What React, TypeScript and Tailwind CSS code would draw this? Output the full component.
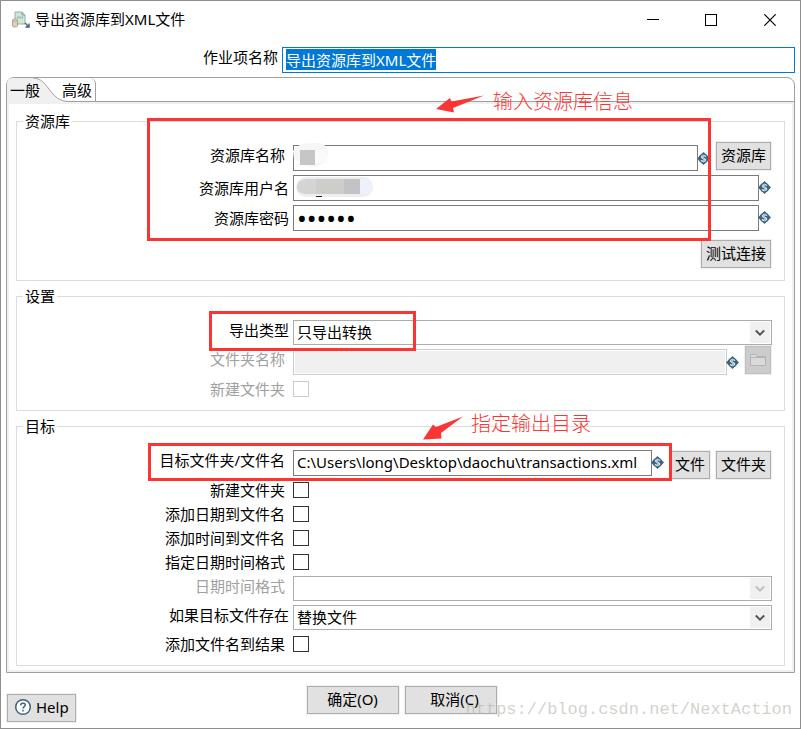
import { useEffect, useRef } from "react";
import type { ReactNode } from "react";

const inputFrame = "h-[26px] min-w-0 flex-1 border border-[#7a7a7a] bg-white px-[3px] outline-none";
const inputBox = `${inputFrame} pb-0.5`;

function VariableIcon() {
  return (
    <svg viewBox="0 0 13 13" className="mb-0.5 -ml-px h-[13px] w-[13px] shrink-0" aria-hidden="true">
      <circle cx="6.5" cy="6.5" r="4.800" fill="#3d6480" />
      <path d="M6.5 0 L13 6.5 L6.5 13 L0 6.5 Z" fill="#3d6480" />
      <path
        d="M8.800 4.700 C8.300 3.200 4.600 3.200 4.600 5 C4.600 6.900 8.600 6 8.600 8 C8.500 9.900 4.800 9.800 4.300 8.200"
        fill="none"
        stroke="#e3ecf2"
        strokeWidth="1.400"
      />
      <path d="M6.5 2.500 V10.500" stroke="#a9bfcd" />
    </svg>
  );
}

function Button({ children, className = "h-7 px-1" }: { children: ReactNode; className?: string }) {
  return (
    <button
      type="button"
      className={`m-px flex shrink-0 items-center justify-center border border-[#adadad] bg-[#e1e1e1] pb-0.5 whitespace-nowrap shadow-[0_0_0_1px_#f0f0f0] ${className}`}
    >
      {children}
    </button>
  );
}

function Label({
  id,
  children,
  className = "pr-2",
}: {
  id: string;
  children: ReactNode;
  className?: string;
}) {
  return (
    <label htmlFor={id} className={`w-[276px] shrink-0 text-right leading-5 whitespace-nowrap ${className}`}>
      {children}
    </label>
  );
}

function Group({ title, className, children }: { title: string; className: string; children: ReactNode }) {
  return (
    <fieldset className={`min-w-0 border border-[#dcdcdc] pr-3 ${className}`}>
      <legend className="ml-1.5 px-0.5 leading-[22px]">{title}</legend>
      {children}
    </fieldset>
  );
}

function Select({ id, value, disabled = false }: { id: string; value: string; disabled?: boolean }) {
  return (
    <div className="relative flex-1">
      <select
        id={id}
        disabled={disabled}
        className="block h-[25px] w-full appearance-none border border-[#acacb0] bg-white px-[3px] pb-0.5 text-black opacity-100 outline-none"
      >
        <option>{value}</option>
      </select>
      <span className="pointer-events-none absolute inset-y-0.5 right-0.5 flex w-5 items-center justify-center bg-[#f0f0f0]">
        <svg viewBox="0 0 10 8" className="h-2 w-2.5" aria-hidden="true">
          <path d="M0.8 1.5 L5 5.7 L9.2 1.5" fill="none" stroke={disabled ? "#bfbfbf" : "#555555"} strokeWidth="2" />
        </svg>
      </span>
    </div>
  );
}

function CheckRow({
  id,
  label,
  disabled = false,
  className = "",
}: {
  id: string;
  label: string;
  disabled?: boolean;
  className?: string;
}) {
  return (
    <div className={`flex h-6 items-center ${className}`}>
      <Label id={id} className={disabled ? "pr-2 text-[#a0a0a0]" : "pr-2"}>
        {label}
      </Label>
      <input
        id={id}
        type="checkbox"
        disabled={disabled}
        className="size-4 appearance-none border border-[#333333] bg-white checked:bg-[#0078d7] disabled:border-[#cccccc]"
      />
    </div>
  );
}

function TitleBar() {
  return (
    <header className="flex h-[38px] items-center pl-2.5">
      <svg viewBox="0 0 20 18" className="h-[18px] w-5" aria-hidden="true">
        <path d="M4 1 H11 L14 4 V13 H4 Z" fill="#cfe8d6" stroke="#8fb3a5" />
        <path d="M11 1 V4 H14" fill="none" stroke="#7fa0a0" />
        <path d="M6 6.5 H12" stroke="#8fb3a5" strokeDasharray="1.5 0.8" strokeWidth="2" />
        <path d="M1.5 9 V15 C1.5 16.3 6.5 16.3 6.5 15 V9" fill="#e2cdb8" stroke="#b7a291" />
        <ellipse cx="4" cy="9" rx="2.5" ry="1" fill="#f1e4d6" stroke="#b7a291" />
        <path d="M14 12 L17.5 15.5 M18 12.5 V16 H14.5" fill="none" stroke="#38647f" strokeWidth="1.4" />
      </svg>
      <h1 className="ml-1 flex-1 pb-0.5 text-[15px] font-normal">导出资源库到XML文件</h1>
      <button type="button" aria-label="最小化" className="flex h-full w-[58px] items-center justify-center">
        <svg viewBox="0 0 12 12" className="size-3">
          <path d="M0 5.5 H12" stroke="black" />
        </svg>
      </button>
      <button type="button" aria-label="最大化" className="flex h-full w-[58px] items-center justify-center">
        <svg viewBox="0 0 12 12" className="size-3">
          <rect x="0.5" y="0.5" width="11" height="11" fill="none" stroke="black" />
        </svg>
      </button>
      <button type="button" aria-label="关闭" className="flex h-full w-[60px] items-center justify-center">
        <svg viewBox="0 0 12 12" className="size-3">
          <path d="M0.3 0.3 L11.7 11.7 M11.7 0.3 L0.3 11.7" stroke="black" strokeWidth="1.2" />
        </svg>
      </button>
    </header>
  );
}

function Tabs() {
  return (
    <div role="tablist" className="relative flex h-[24px] border-b border-[#a0a0a0]">
      <svg viewBox="0 0 90 25" className="absolute top-0 left-0 h-[25px] w-[90px]" aria-hidden="true">
        <path d="M0 25 V6 Q0 0 6 0 H26 C42 0 42 23.5 62 23.5 V25 Z" fill="#f0f0f0" />
        <path d="M26 0 C42 0 42 23.5 62 23.5" fill="none" stroke="#a0a0a0" />
      </svg>
      <button type="button" role="tab" aria-selected="true" className="relative h-full w-[53px] pl-[3px] text-left">
        一般
      </button>
      <button
        type="button"
        role="tab"
        aria-selected="false"
        className="relative h-full rounded-tr-md border-r border-[#a0a0a0] pr-[3px] pl-0.5"
      >
        高级
      </button>
    </div>
  );
}

function Annotations() {
  return (
    <div className="pointer-events-none absolute inset-0 text-xl leading-6 font-light text-[#fa3534]">
      <svg viewBox="0 0 48 18" className="absolute top-[94px] left-[435px] h-[18px] w-12" aria-hidden="true">
        <path d="M0 14 L14 3 L15.500 6.500 L48 0.500 L17 13 L18 17.5 Z" fill="#fa3534" />
      </svg>
      <p className="absolute top-[89px] left-[492px]">输入资源库信息</p>
      <div className="absolute top-[117px] left-[146px] h-[123px] w-[564px] border-3 border-[#fa3534]" />
      <div className="absolute top-[310px] left-[208px] h-10 w-[207px] border-3 border-[#fa3534]" />
      <svg viewBox="0 0 40 24" className="absolute top-[415px] left-[422px] h-6 w-10" aria-hidden="true">
        <path d="M0 23.5 L10 8.500 L13 11 L40 0.500 L18 17 L18.500 22.500 Z" fill="#fa3534" />
      </svg>
      <p className="absolute top-[411px] left-[470px]">指定输出目录</p>
      <div className="absolute top-[442px] left-[147px] h-[38px] w-[524px] border-3 border-[#fa3534]" />
    </div>
  );
}

function NameRow() {
  const ref = useRef<HTMLInputElement>(null);
  useEffect(() => {
    ref.current?.focus();
    ref.current?.select();
  }, []);
  return (
    <div className="mt-2 flex pr-[5px]">
      <label htmlFor="job-name" className="w-[281px] shrink-0 pr-1 text-right leading-5">
        作业项名称
      </label>
      <input
        id="job-name"
        ref={ref}
        defaultValue="导出资源库到XML文件"
        className="h-[26px] min-w-0 flex-1 border border-[#0078d7] bg-white px-[3px] pb-0.5 outline-none selection:bg-[#0078d7] selection:text-white"
      />
    </div>
  );
}

export default function App() {
  return (
    <main className="relative flex min-h-screen flex-col border border-[#8e8e8e] bg-white font-['Noto_Sans','Noto_Sans_CJK_SC',sans-serif] text-[15px] leading-5 text-black">
      <TitleBar />
      <NameRow />

      <section className="mx-[5px] mt-1 rounded-t-lg border border-[#a0a0a0]">
        <Tabs />
        <div className="border-2 border-[#f0f0f0] px-[7px] pt-1.5 pb-1">
          <Group title="资源库" className="pb-[11px]">
            <div className="mt-[9px] flex h-[30px] items-end">
              <Label id="repo-name" className="self-start pt-1 pr-2">
                资源库名称
              </Label>
              <div className="relative flex flex-1">
                <input id="repo-name" className={inputBox} />
                <svg viewBox="0 0 36 26" className="absolute -top-0.5 left-0 h-[26px] w-9" aria-hidden="true">
                  <path d="M0 8 Q5 0 18 0 H28 Q36 4 35 12 Q34 20 26 22 Q18 27 12 22 L1 16 Z" fill="#f6f6f6" />
                  <path d="M7 7 H22 V22 H7 Z" fill="#c6c6c6" />
                  <path d="M22 7 H34 V20 H22 Z" fill="#fafafa" />
                </svg>
              </div>
              <span className="mb-1">
                <VariableIcon />
              </span>
              <span className="ml-[5px]">
                <Button>资源库</Button>
              </span>
            </div>
            <div className="mt-1 flex items-center">
              <Label id="repo-user" className="pr-1">
                资源库用户名
              </Label>
              <div className="relative flex flex-1">
                <input id="repo-user" className={inputBox} />
                <svg viewBox="0 0 77 21" className="absolute top-px left-[3px] h-[21px] w-[77px]" aria-hidden="true">
                  <rect y="1" width="77" height="20" rx="10" fill="#eceef1" />
                  <path d="M10 3 H30 V18 H9 Q1 17 1 11 Q1 4 10 3 Z" fill="#d4d4d2" />
                  <path d="M20 3 H64 V18 H20 Z" fill="#cdcdcb" />
                  <path d="M48 3 H64 V18 H48 Z" fill="#c3c3c5" />
                  <path d="M64 3 H70 Q76 5 76 11 Q75 18 68 18 H64 Z" fill="#edf1fb" />
                  <path d="M20 20.500 H26" stroke="#222222" />
                </svg>
              </div>
              <VariableIcon />
              <span className="w-px" />
            </div>
            <div className="mt-1 flex items-center">
              <Label id="repo-password" className="pr-1">
                资源库密码
              </Label>
              <input
                id="repo-password"
                type="password"
                defaultValue="secret"
                className={`${inputFrame} text-[26px]`}
              />
              <VariableIcon />
              <span className="w-px" />
            </div>
            <div className="mt-2 flex justify-end">
              <Button>测试连接</Button>
            </div>
          </Group>

          <Group title="设置" className="mt-1 pb-[9px]">
            <div className="mt-[13px] flex">
              <Label id="export-type" className="pr-1">
                导出类型
              </Label>
              <Select id="export-type" value="只导出转换" />
            </div>
            <div className="flex h-[30px] items-end">
              <Label id="folder-name" className="self-start pt-1 pr-2 text-[#a0a0a0]">
                文件夹名称
              </Label>
              <input
                id="folder-name"
                disabled
                className="h-[26px] min-w-0 flex-1 border border-[#cccccc] bg-[#f0f0f0] px-[3px] inset-ring inset-ring-white"
              />
              <span className="mb-1">
                <VariableIcon />
              </span>
              <span className="ml-[5px]">
                <button
                  type="button"
                  disabled
                  aria-label="浏览文件夹"
                  className="m-px flex h-7 w-[26px] items-center justify-center border border-[#bfbfbf] bg-[#cccccc] shadow-[0_0_0_1px_#f0f0f0]"
                >
                  <svg viewBox="0 0 16 14" className="h-3.5 w-4">
                    <path d="M0.5 12.500 V1.500 H6 L7 3.500 H15.500 V12.500 Z" fill="#dadada" stroke="#b3b3b3" />
                    <path d="M1 4.500 H15" stroke="#b3b3b3" />
                  </svg>
                </button>
              </span>
            </div>
            <CheckRow id="settings-new-folder" label="新建文件夹" disabled className="mt-0.5" />
          </Group>

          <Group title="目标" className="mt-1 pb-[9px]">
            <div className="mt-[13px] flex h-7 items-start">
              <Label id="target-file">目标文件夹/文件名</Label>
              <input
                id="target-file"
                defaultValue="C:\Users\long\Desktop\daochu\transactions.xml"
                className={inputBox}
              />
              <span className="mt-1.5">
                <VariableIcon />
              </span>
              <div className="ml-[5px] flex gap-1">
                <Button>文件</Button>
                <Button>文件夹</Button>
              </div>
            </div>
            <CheckRow id="target-new-folder" label="新建文件夹" />
            <CheckRow id="add-date" label="添加日期到文件名" />
            <CheckRow id="add-time" label="添加时间到文件名" />
            <CheckRow id="custom-format" label="指定日期时间格式" />
            <div className="mt-0.5 flex">
              <Label id="date-format" className="pr-2 text-[#a0a0a0]">
                日期时间格式
              </Label>
              <Select id="date-format" value="" disabled />
            </div>
            <div className="mt-1 flex">
              <Label id="if-exists" className="pr-1">
                如果目标文件存在
              </Label>
              <Select id="if-exists" value="替换文件" />
            </div>
            <CheckRow id="add-to-result" label="添加文件名到结果" className="mt-0.5" />
          </Group>
        </div>
      </section>

      <footer className="grid grid-cols-[1fr_auto_1fr] px-[5px] pt-3 pb-[5px]">
        <div className="mt-2 flex">
          <Button className="h-7 gap-1 px-1.5">
            <svg viewBox="0 0 18 18" className="size-[18px]" aria-hidden="true">
              <circle cx="9" cy="9" r="7.300" fill="white" stroke="#3d6480" strokeWidth="1.500" />
              <path d="M6.700 7.200 C6.700 4.500 11.300 4.500 11.300 7.100 C11.300 8.700 9 8.700 9 10.600 M9 11.800 V13.400" fill="none" stroke="#3d6480" strokeWidth="1.500" />
            </svg>
            Help
          </Button>
        </div>
        <div className="flex items-start gap-1 pl-0.5">
          <Button className="h-7 w-[92px]">确定(O)</Button>
          <Button className="h-7 w-[92px] pl-2">取消(C)</Button>
        </div>
      </footer>

      <Annotations />
      <p className="pointer-events-none absolute right-2 bottom-1.5 font-['Liberation_Mono',monospace] text-[17px] leading-6 text-[#b4b4aa]/60">
        https://blog.csdn.net/NextAction
      </p>
    </main>
  );
}
